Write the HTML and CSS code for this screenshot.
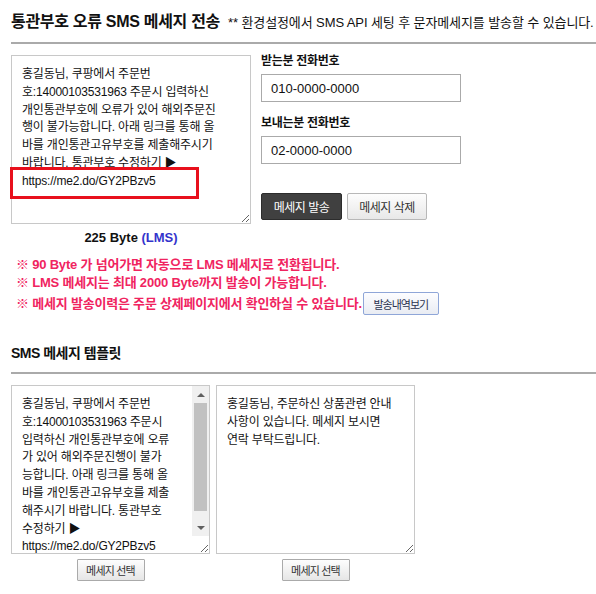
FILE: index.html
```html
<!DOCTYPE html>
<html lang="ko">
<head>
  <meta charset="UTF-8">
  <title>통관부호 오류 SMS 메세지 전송</title>
  <link rel="stylesheet" href="styles.css">
</head>
<body>
  <div class="section-title">
    <h2>통관부호 오류 SMS 메세지 전송</h2>
    <span class="hint">** 환경설정에서 SMS API 세팅 후 문자메세지를 발송할 수 있습니다.</span>
  </div>

  <div class="send-row">
    <div class="msg-col">
      <div class="msg-box">
        <textarea class="msg-text" id="smsText">홍길동님, 쿠팡에서 주문번
호:14000103531963 주문시 입력하신
개인통관부호에 오류가 있어 해외주문진
행이 불가능합니다. 아래 링크를 통해 올
바를 개인통관고유부호를 제출해주시기
바랍니다. 통관부호 수정하기 ▶
https://me2.do/GY2PBzv5</textarea>
        <div class="link-mark"></div>
      </div>
      <div class="byte-count">225 Byte <span class="lms">(LMS)</span></div>
    </div>
    <div class="phone-col">
      <label class="field-label" for="toPhone">받는분 전화번호</label>
      <input type="text" id="toPhone" class="phone-input" value="010-0000-0000">
      <label class="field-label" for="fromPhone">보내는분 전화번호</label>
      <input type="text" id="fromPhone" class="phone-input" value="02-0000-0000">
      <div class="send-buttons">
        <button type="button" class="btn btn-dark">메세지 발송</button>
        <button type="button" class="btn btn-light">메세지 삭제</button>
      </div>
    </div>
  </div>

  <ul class="notes">
    <li>※ 90 Byte 가 넘어가면 자동으로 LMS 메세지로 전환됩니다.</li>
    <li>※ LMS 메세지는 최대 2000 Byte까지 발송이 가능합니다.</li>
    <li class="with-btn">※ 메세지 발송이력은 주문 상제페이지에서 확인하실 수 있습니다. <button type="button" class="btn-history">발송내역보기</button></li>
  </ul>

  <div class="section-title second">
    <h2>SMS 메세지 템플릿</h2>
  </div>

  <div class="templates">
    <div class="template">
      <div class="tpl-box">
        <textarea class="tpl-text scroll">홍길동님, 쿠팡에서 주문번
호:14000103531963 주문시
입력하신 개인통관부호에 오류
가 있어 해외주문진행이 불가
능합니다. 아래 링크를 통해 올
바를 개인통관고유부호를 제출
해주시기 바랍니다. 통관부호
수정하기 ▶
https://me2.do/GY2PBzv5</textarea>
        <div class="scrollbar">
          <span class="sb-btn"><i class="arrow-up"></i></span>
          <span class="sb-track"><span class="sb-thumb"></span></span>
          <span class="sb-btn"><i class="arrow-down"></i></span>
        </div>
      </div>
      <button type="button" class="btn-pick">메세지 선택</button>
    </div>
    <div class="template">
      <div class="tpl-box">
        <textarea class="tpl-text">홍길동님, 주문하신 상품관련 안내
사항이 있습니다. 메세지 보시면
연락 부탁드립니다.</textarea>
      </div>
      <button type="button" class="btn-pick">메세지 선택</button>
    </div>
  </div>
</body>
</html>
```

FILE: styles.css
```css
* { box-sizing: border-box; }
body {
  margin: 0;
  padding: 0 0 0 11px;
  font-family: "Liberation Sans", "Noto Sans CJK KR", sans-serif;
  font-size: 13px;
  color: #111;
  background: #fff;
}

/* Section headings */
.section-title {
  display: flex;
  align-items: baseline;
  gap: 8px;
  padding-top: 12px;
  padding-bottom: 10px;
  border-bottom: 2px solid #aaa;
  white-space: nowrap;
}
.section-title h2 {
  margin: 0;
  font-size: 16px;
  font-weight: bold;
  line-height: 20px;
  letter-spacing: -0.3px;
}
.section-title .hint {
  font-size: 13px;
  letter-spacing: -0.1px;
}
.section-title.second {
  margin-top: 16px;
  padding-bottom: 9px;
}
.section-title.second h2 {
  font-size: 14px;
  letter-spacing: -0.5px;
}

/* Send area */
.send-row {
  display: flex;
  gap: 10px;
  margin-top: 11px;
}
.msg-col {
  width: 240px;
}
.msg-box {
  position: relative;
}
.msg-text,
.tpl-text {
  display: block;
  height: 169px;
  padding: 10px 6px 0 10px;
  border: 1px solid #c8c8c8;
  font-family: inherit;
  font-size: 12px;
  letter-spacing: -0.2px;
  line-height: 17.8px;
  color: #111;
  white-space: pre-wrap;
  resize: vertical;
}
.msg-text {
  width: 240px;
}
.link-mark {
  position: absolute;
  left: -1px;
  top: 112px;
  width: 189px;
  height: 32px;
  border: 3px solid #e8101c;
}
.byte-count {
  margin-top: 6px;
  line-height: 16px;
  text-align: center;
  font-weight: bold;
}
.byte-count .lms {
  color: #3333cc;
}

.phone-col {
  display: flex;
  flex-direction: column;
  align-items: flex-start;
  margin-top: -2px;
}
.field-label {
  font-size: 12px;
  font-weight: bold;
  letter-spacing: -0.3px;
  line-height: 16px;
  margin-bottom: 5px;
}
.phone-input {
  width: 200px;
  height: 28px;
  padding: 0 9px;
  border: 1px solid #aaa;
  font-family: inherit;
  font-size: 13px;
  color: #111;
  margin-bottom: 13px;
}
.send-buttons {
  display: flex;
  gap: 5px;
  margin-top: 16px;
}
.btn {
  height: 27px;
  padding: 0;
  font-family: inherit;
  font-size: 12px;
  letter-spacing: -0.5px;
  white-space: nowrap;
  border-radius: 2px;
  cursor: pointer;
}
.btn-dark {
  width: 81px;
  background: #404040;
  color: #fff;
  border: 1px solid #2c2c2c;
}
.btn-light {
  width: 80px;
  background: linear-gradient(#fdfdfd, #e8e8e8);
  color: #333;
  border: 1px solid #b8b8b8;
}

/* Notes */
.notes {
  list-style: none;
  margin: 10px 0 0 5px;
  padding: 0;
  color: #f0245f;
  font-weight: bold;
  letter-spacing: -0.2px;
  line-height: 18px;
}
.notes .with-btn {
  display: flex;
  align-items: center;
  gap: 1px;
  height: 23px;
}
.btn-history {
  width: 76px;
  height: 23px;
  padding: 0;
  font-family: inherit;
  font-size: 11px;
  font-weight: normal;
  letter-spacing: -1px;
  color: #2a3350;
  background: linear-gradient(#fdfdff, #e9ecf3);
  border: 1px solid #8fa6d8;
  border-radius: 2px;
}

/* Templates */
.templates {
  display: flex;
  gap: 6px;
  margin-top: 11px;
}
.template {
  width: 199px;
  display: flex;
  flex-direction: column;
  align-items: center;
}
.tpl-box {
  position: relative;
}
.tpl-text {
  width: 199px;
  overflow-y: auto;
}
.tpl-text.scroll {
  padding-right: 19px;
}

/* classic scrollbar drawn over the first template */
.scrollbar {
  position: absolute;
  top: 1px;
  right: 1px;
  width: 17px;
  height: 150px;
  display: flex;
  flex-direction: column;
  background: #f0f0f0;
}
.sb-btn {
  display: flex;
  align-items: center;
  justify-content: center;
  height: 17px;
}
.sb-track {
  flex: 1;
  padding: 0 2px;
}
.sb-thumb {
  display: block;
  height: 108px;
  background: #c1c1c1;
}
.arrow-up,
.arrow-down {
  width: 0;
  height: 0;
  border-left: 4px solid transparent;
  border-right: 4px solid transparent;
}
.arrow-up {
  border-bottom: 4px solid #606060;
}
.arrow-down {
  border-top: 4px solid #606060;
}

.btn-pick {
  margin-top: 5px;
  width: 68px;
  height: 22px;
  padding: 0;
  font-family: inherit;
  font-size: 11px;
  letter-spacing: -0.8px;
  color: #333;
  background: linear-gradient(#fdfdfd, #e6e6e6);
  border: 1px solid #aaa;
  border-radius: 1px;
}
```
